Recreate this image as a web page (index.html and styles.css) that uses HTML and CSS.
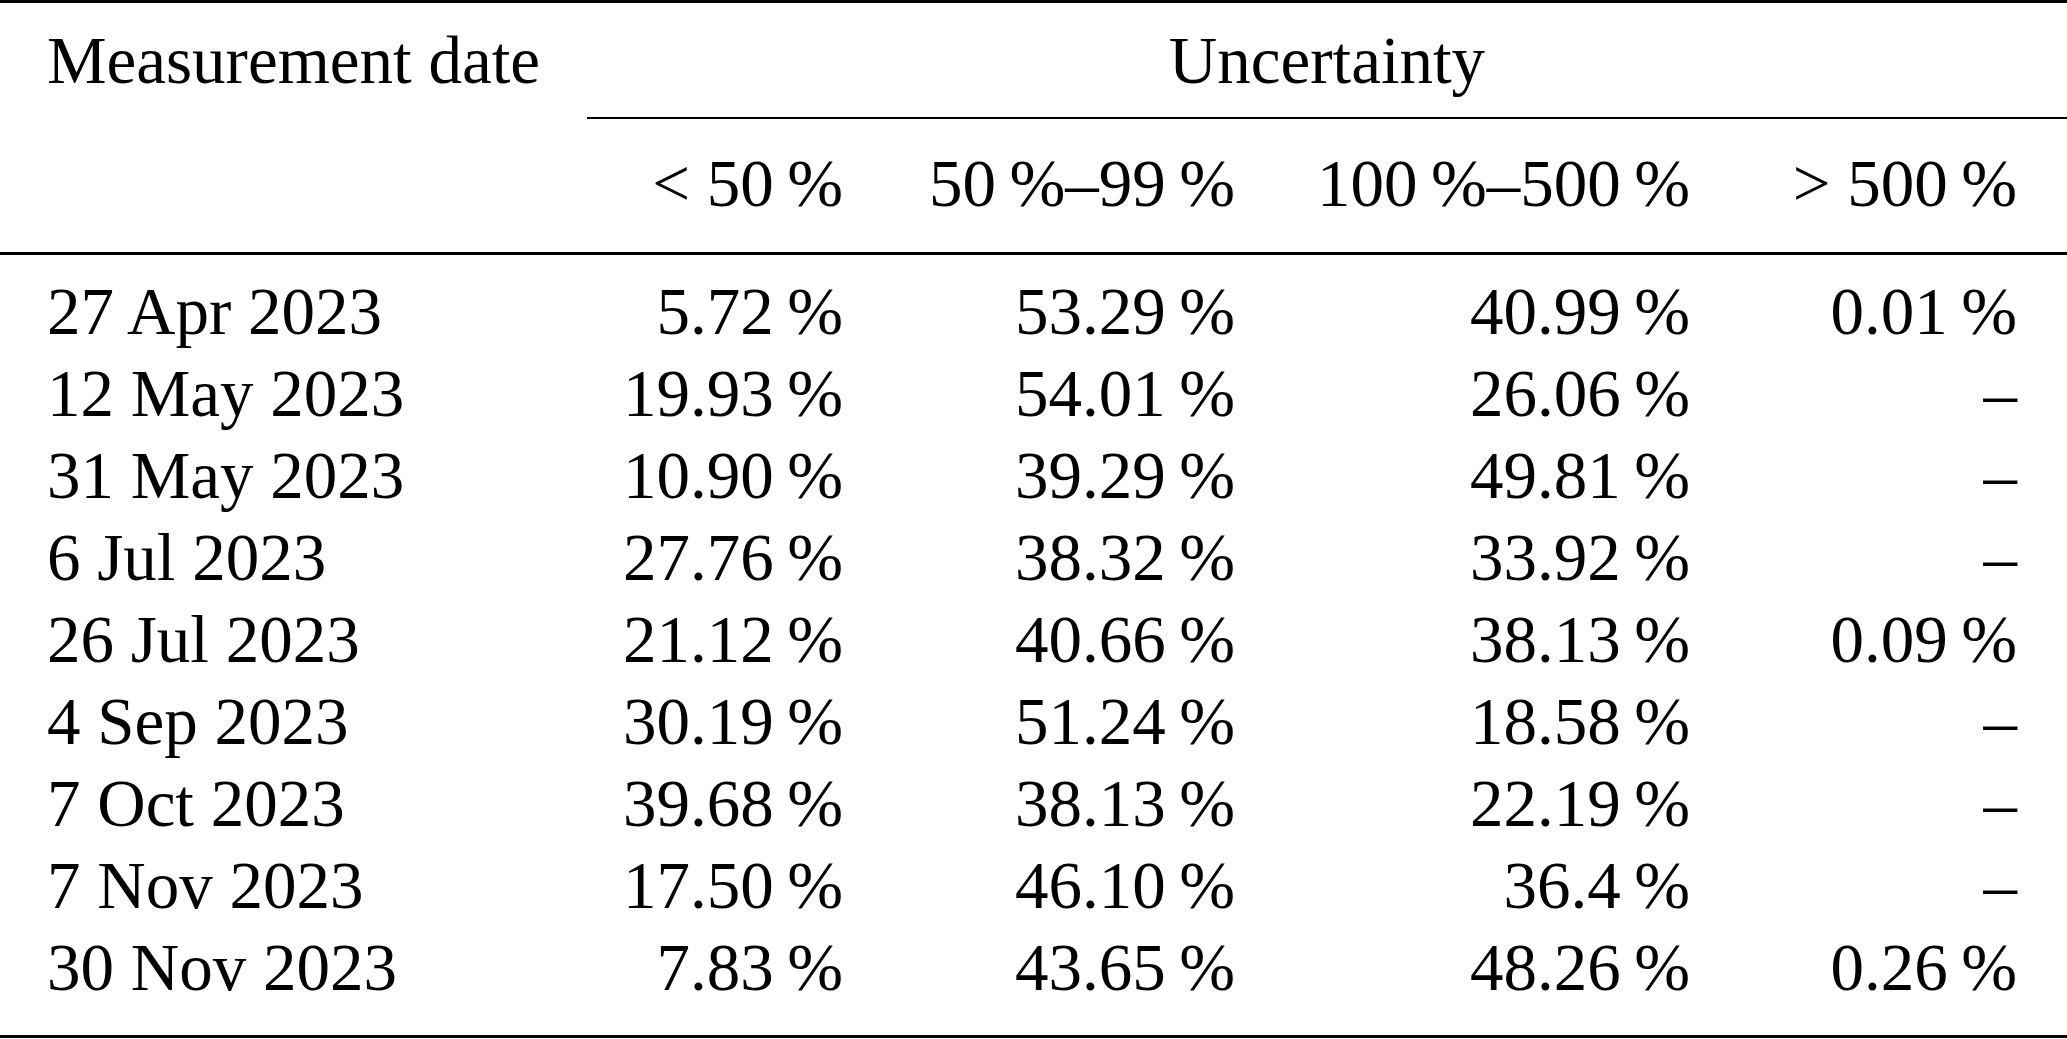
FILE: index.html
```html
<!DOCTYPE html>
<html lang="en">
<head>
<meta charset="utf-8">
<title>Uncertainty by measurement date</title>
<link rel="stylesheet" href="styles.css">
</head>
<body>
<div class="table">
  <div class="rule rule-heavy"></div>
  <div class="row head1">
    <div class="cell date">Measurement date</div>
    <div class="cell group">Uncertainty</div>
  </div>
  <div class="cmidrule"></div>
  <div class="row head2">
    <div class="cell date"></div>
    <div class="cell num">&lt; 50&thinsp;%</div>
    <div class="cell num">50&thinsp;%–99&thinsp;%</div>
    <div class="cell num">100&thinsp;%–500&thinsp;%</div>
    <div class="cell num last">&gt; 500&thinsp;%</div>
  </div>
  <div class="rule rule-mid"></div>
  <div class="body">
    <div class="row"><div class="cell date">27 Apr 2023</div><div class="cell num">5.72&thinsp;%</div><div class="cell num">53.29&thinsp;%</div><div class="cell num">40.99&thinsp;%</div><div class="cell num last">0.01&thinsp;%</div></div>
    <div class="row"><div class="cell date">12 May 2023</div><div class="cell num">19.93&thinsp;%</div><div class="cell num">54.01&thinsp;%</div><div class="cell num">26.06&thinsp;%</div><div class="cell num last">–</div></div>
    <div class="row"><div class="cell date">31 May 2023</div><div class="cell num">10.90&thinsp;%</div><div class="cell num">39.29&thinsp;%</div><div class="cell num">49.81&thinsp;%</div><div class="cell num last">–</div></div>
    <div class="row"><div class="cell date">6 Jul 2023</div><div class="cell num">27.76&thinsp;%</div><div class="cell num">38.32&thinsp;%</div><div class="cell num">33.92&thinsp;%</div><div class="cell num last">–</div></div>
    <div class="row"><div class="cell date">26 Jul 2023</div><div class="cell num">21.12&thinsp;%</div><div class="cell num">40.66&thinsp;%</div><div class="cell num">38.13&thinsp;%</div><div class="cell num last">0.09&thinsp;%</div></div>
    <div class="row"><div class="cell date">4 Sep 2023</div><div class="cell num">30.19&thinsp;%</div><div class="cell num">51.24&thinsp;%</div><div class="cell num">18.58&thinsp;%</div><div class="cell num last">–</div></div>
    <div class="row"><div class="cell date">7 Oct 2023</div><div class="cell num">39.68&thinsp;%</div><div class="cell num">38.13&thinsp;%</div><div class="cell num">22.19&thinsp;%</div><div class="cell num last">–</div></div>
    <div class="row"><div class="cell date">7 Nov 2023</div><div class="cell num">17.50&thinsp;%</div><div class="cell num">46.10&thinsp;%</div><div class="cell num">36.4&thinsp;%</div><div class="cell num last">–</div></div>
    <div class="row"><div class="cell date">30 Nov 2023</div><div class="cell num">7.83&thinsp;%</div><div class="cell num">43.65&thinsp;%</div><div class="cell num">48.26&thinsp;%</div><div class="cell num last">0.26&thinsp;%</div></div>
  </div>
  <div class="rule rule-heavy"></div>
</div>
</body>
</html>
```

FILE: styles.css
```css
html, body {
  margin: 0;
  padding: 0;
  background: #ffffff;
}

body {
  font-family: "Liberation Serif", "Times New Roman", serif;
  font-size: 67px;
  line-height: 82px;
  color: #000000;
}

.table {
  width: 2067px;
  display: flex;
  flex-direction: column;
}

.rule {
  background: #000000;
  height: 3px;
}

.cmidrule {
  background: #000000;
  height: 2px;
  margin-left: 587px;
}

.row {
  display: grid;
  grid-template-columns: 587px 303px 392px 455px 330px;
}

.head1 {
  padding: 16px 0 16px;
}

.head2 {
  padding: 23px 0 28px;
}

.body {
  padding: 15px 0 27px;
}

.cell {
  white-space: nowrap;
}

.date {
  padding-left: 47px;
}

.group {
  grid-column: 2 / -1;
  text-align: center;
}

.num {
  text-align: right;
  padding-right: 47px;
}

.num.last {
  padding-right: 50px;
}
```
